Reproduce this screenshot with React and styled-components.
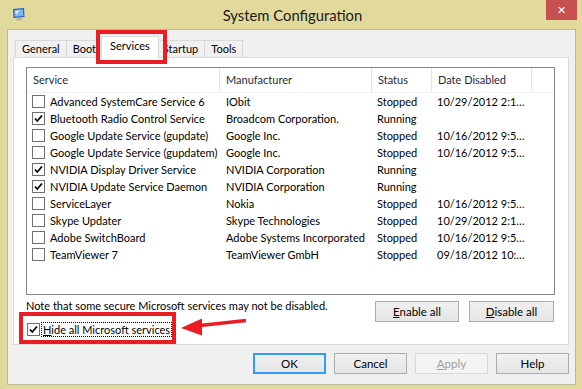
import React from 'react'
import styled, { createGlobalStyle } from 'styled-components'

const GlobalStyle = createGlobalStyle`
  html, body { margin: 0; padding: 0; }
  body {
    font-family: Lato, "Noto Sans", sans-serif;
    font-size: 11px;
    color: #000;
  }
  * { box-sizing: border-box; }
`

const services = [
  { name: 'Advanced SystemCare Service 6', maker: 'IObit', status: 'Stopped', date: '10/29/2012 2:1…', on: false },
  { name: 'Bluetooth Radio Control Service', maker: 'Broadcom Corporation.', status: 'Running', date: '', on: true },
  { name: 'Google Update Service (gupdate)', maker: 'Google Inc.', status: 'Stopped', date: '10/16/2012 9:5…', on: false },
  { name: 'Google Update Service (gupdatem)', maker: 'Google Inc.', status: 'Stopped', date: '10/16/2012 9:5…', on: false },
  { name: 'NVIDIA Display Driver Service', maker: 'NVIDIA Corporation', status: 'Running', date: '', on: true },
  { name: 'NVIDIA Update Service Daemon', maker: 'NVIDIA Corporation', status: 'Running', date: '', on: true },
  { name: 'ServiceLayer', maker: 'Nokia', status: 'Stopped', date: '10/16/2012 9:5…', on: false },
  { name: 'Skype Updater', maker: 'Skype Technologies', status: 'Stopped', date: '10/29/2012 2:1…', on: false },
  { name: 'Adobe SwitchBoard', maker: 'Adobe Systems Incorporated', status: 'Stopped', date: '10/16/2012 9:5…', on: false },
  { name: 'TeamViewer 7', maker: 'TeamViewer GmbH', status: 'Stopped', date: '09/18/2012 10:…', on: false },
]

const tabs = ['General', 'Boot', 'Services', 'Startup', 'Tools']

const cols = '193px 152px 60px 100px 1fr'

const Check = ({ on }) => (
  <Box>
    {on && (
      <svg width="11" height="11" viewBox="0 0 11 11">
        <path d="M2 5.5 L4.3 8 L9 2.5" fill="none" stroke="#000" strokeWidth="1.8" />
      </svg>
    )}
  </Box>
)

const AppIcon = () => (
  <svg width="14" height="15" viewBox="0 0 14 15">
    <path d="M1 2 L12 1 L12.5 10 L1.5 11 Z" fill="#2a5fc4" />
    <path d="M2.3 3 L11 2.2 L11.4 9 L2.7 9.8 Z" fill="#7fb4f0" />
    <path d="M3 4 L8 3.5 L4 8 Z" fill="#d8ecff" />
    <path d="M5 11.5 L9 11 L10 13 L4 13.5 Z" fill="#a9a9a9" />
  </svg>
)

export default function App() {
  return (
    <>
      <GlobalStyle />
      <Window>
        <TitleBar>
          <IconSlot><AppIcon /></IconSlot>
          <Title>System Configuration</Title>
          <Close>✕</Close>
        </TitleBar>
        <Client>
          <TabRow>
            {tabs.map((t) => (
              <Tab key={t} $active={t === 'Services'}>{t}</Tab>
            ))}
          </TabRow>
          <Panel>
            <ListView>
              <HeaderRow>
                <HeadCell>Service</HeadCell>
                <HeadCell>Manufacturer</HeadCell>
                <HeadCell>Status</HeadCell>
                <HeadCell>Date Disabled</HeadCell>
                <HeadCell />
              </HeaderRow>
              {services.map((s) => (
                <Row key={s.name}>
                  <NameCell>
                    <Check on={s.on} />
                    <span>{s.name}</span>
                  </NameCell>
                  <Cell>{s.maker}</Cell>
                  <Cell $pad={5}>{s.status}</Cell>
                  <Cell $pad={5}>{s.date}</Cell>
                </Row>
              ))}
            </ListView>
            <Footer>
              <Notes>
                <Note>Note that some secure Microsoft services may not be disabled.</Note>
                <HideRow>
                  <Check on />
                  <Focus><U>H</U>ide all Microsoft services</Focus>
                </HideRow>
              </Notes>
              <Buttons>
                <Button $w={84}><U>E</U>nable all</Button>
                <Button $w={85}><U>D</U>isable all</Button>
              </Buttons>
            </Footer>
          </Panel>
          <DialogButtons>
            <Button $w={73} $default>OK</Button>
            <Button $w={73}>Cancel</Button>
            <Button $w={73} disabled><U>A</U>pply</Button>
            <Button $w={73}>Help</Button>
          </DialogButtons>
        </Client>

        <RedBox style={{ left: 96, top: 30, width: 71, height: 34 }} />
        <RedBox style={{ left: 19, top: 312, width: 157, height: 32 }} />
        <Arrow width="70" height="24" viewBox="0 0 70 24">
          <path d="M66 4.5 L20 9.5" stroke="#ec1c24" strokeWidth="3.5" fill="none" />
          <path d="M1 12 L22 2.5 L22 19.5 Z" fill="#ec1c24" />
        </Arrow>
      </Window>
    </>
  )
}

const Window = styled.div`
  position: relative;
  width: 582px;
  height: 389px;
  background: #e2d99c;
  padding: 0 6px 4px 7px;
  display: flex;
  flex-direction: column;
  overflow: hidden;
`

const TitleBar = styled.div`
  height: 29px;
  display: grid;
  grid-template-columns: 1fr auto 1fr;
  align-items: start;
`

const IconSlot = styled.div`
  padding: 7px 0 0 5px;
  line-height: 0;
`

const Title = styled.div`
  font-size: 14.8px;
  line-height: 30px;
  color: #1a1a1a;
  margin-left: 2px;
`

const Close = styled.div`
  justify-self: end;
  margin-right: -1px;
  width: 31px;
  height: 20px;
  background: #c75050;
  color: #fff;
  font-family: "DejaVu Sans", sans-serif;
  font-size: 11px;
  font-weight: bold;
  display: flex;
  align-items: center;
  justify-content: center;
`

const Client = styled.div`
  flex: 1;
  background: #f0f0f0;
  border: 1px solid #bdb797;
  padding: 6px 6px 0 5px;
  display: flex;
  flex-direction: column;
`

const TabRow = styled.div`
  display: flex;
  align-items: flex-end;
  height: 22px;
  padding-left: 2px;
  margin-bottom: -1px;
  position: relative;
  z-index: 1;
`

const Tab = styled.div`
  height: ${(p) => (p.$active ? 22 : 17)}px;
  margin: ${(p) => (p.$active ? '0 -2px' : '0 0 1px')};
  padding: ${(p) => (p.$active ? '0 8px' : '0 6px')};
  border: 1px solid #d9d9d9;
  border-bottom: none;
  margin-left: ${(p) => (p.$active ? '-2px' : '-1px')};
  background: ${(p) => (p.$active ? '#fff' : '#f0f0f0')};
  line-height: ${(p) => (p.$active ? 18 : 16)}px;
  position: relative;
  z-index: ${(p) => (p.$active ? 2 : 0)};
  &:first-child { margin-left: 0; }
`

const Panel = styled.div`
  height: 288px;
  background: #fff;
  border: 1px solid #d9d9d9;
  padding: 9px 13px 0 12px;
  display: flex;
  flex-direction: column;
`

const ListView = styled.div`
  height: 228px;
  border: 1px solid #828790;
  background: #fff;
`

const HeaderRow = styled.div`
  display: grid;
  grid-template-columns: ${cols};
  height: 25px;
  border-bottom: 1px solid #f2f2f2;
`

const HeadCell = styled.div`
  border-right: 1px solid #e5e5e5;
  padding-left: 6px;
  line-height: 24px;
  color: #1e2a38;
  white-space: nowrap;
  overflow: hidden;
  &:last-child { border-right: none; }
`

const Row = styled.div`
  display: grid;
  grid-template-columns: ${cols};
  height: 17px;
  line-height: 17px;
`

const Cell = styled.div`
  padding-left: ${(p) => p.$pad ?? 6}px;
  white-space: nowrap;
  overflow: hidden;
`

const NameCell = styled.div`
  display: flex;
  align-items: center;
  gap: 5px;
  padding-left: 5px;
  white-space: nowrap;
  overflow: hidden;
`

const Box = styled.div`
  width: 13px;
  height: 13px;
  flex: none;
  border: 1px solid #707070;
  background: #fff;
  display: flex;
  align-items: center;
  justify-content: center;
`

const Footer = styled.div`
  display: flex;
  justify-content: space-between;
  align-items: flex-start;
`

const Notes = styled.div`
  display: flex;
  flex-direction: column;
  white-space: nowrap;
`

const Note = styled.div`
  margin-top: 3px;
  line-height: 16px;
`

const HideRow = styled.div`
  display: flex;
  align-items: center;
  gap: 1px;
  margin: 8px 0 0 1px;
`

const Focus = styled.span`
  border: 1px dotted #000;
  padding: 0 1px;
  line-height: 13px;
`

const U = styled.span`
  text-decoration: underline;
`

const Buttons = styled.div`
  display: flex;
  gap: 10px;
  margin-top: 6px;
  margin-right: 1px;
`

const Button = styled.button`
  width: ${(p) => p.$w}px;
  height: 21px;
  padding: 0;
  font: inherit;
  font-size: 11.5px;
  color: ${(p) => (p.disabled ? '#a0a0a0' : '#000')};
  background: ${(p) => (p.disabled ? '#f4f4f4' : 'linear-gradient(#f0f0f0, #e5e5e5)')};
  border: 1px solid ${(p) => (p.disabled ? '#d9d9d9' : p.$default ? '#3399ff' : '#acacac')};
  box-shadow: ${(p) => (p.$default ? 'inset 0 0 0 1px #3399ff' : 'none')};
`

const DialogButtons = styled.div`
  display: flex;
  justify-content: flex-end;
  gap: 8px;
  margin-top: 8px;
`

const RedBox = styled.div`
  position: absolute;
  border: 4px solid #ec1c24;
  z-index: 5;
`

const Arrow = styled.svg`
  position: absolute;
  left: 180px;
  top: 316px;
  z-index: 5;
`
